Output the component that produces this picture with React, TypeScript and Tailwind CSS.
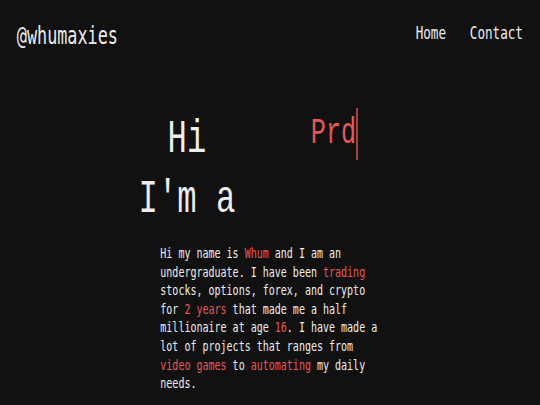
const red = "text-[#e35858]";

function Hl({ children }: { children: string }) {
  return <span className={red}>{children}</span>;
}

export default function App() {
  return (
    <div className="h-[405px] w-full overflow-hidden bg-[#111111] font-['DejaVu_Sans_Mono',monospace] text-[#ededed]">
      {/* the page is drawn condensed: laid out wide, then squeezed horizontally */}
      <div className="w-[771px] origin-top-left scale-x-[0.7]">
        <header className="flex items-start justify-between px-6 pt-6">
          <a className="text-[24px] leading-[24px]">@whumaxies</a>
          <nav className="flex gap-[34px] text-[18px] leading-[18px]">
            <a>Home</a>
            <a>Contact</a>
          </nav>
        </header>

        <section className="mt-[60px] flex items-start pl-[198px] font-['Liberation_Mono',monospace]">
          <h1 className="w-[138px] pt-[2px] text-center text-[46px] leading-[60px] font-normal whitespace-nowrap">
            Hi
            <br />
            I'm a
          </h1>
          <span className={`ml-[108px] border-r-2 border-[#e35858] text-[36px] leading-[52px] ${red}`}>Prd</span>
        </section>

        <p className="mt-[14px] ml-[229px] w-[330px] text-[14.3px] leading-[18.6px] whitespace-nowrap">
          Hi my name is <Hl>Whum</Hl> and I am an
          <br />
          undergraduate. I have been <Hl>trading</Hl>
          <br />
          stocks, options, forex, and crypto
          <br />
          for <Hl>2 years</Hl> that made me a half
          <br />
          millionaire at age <Hl>16</Hl>. I have made a
          <br />
          lot of projects that ranges from
          <br />
          <Hl>video games</Hl> to <Hl>automating</Hl> my daily
          <br />
          needs.
        </p>
      </div>
    </div>
  );
}
